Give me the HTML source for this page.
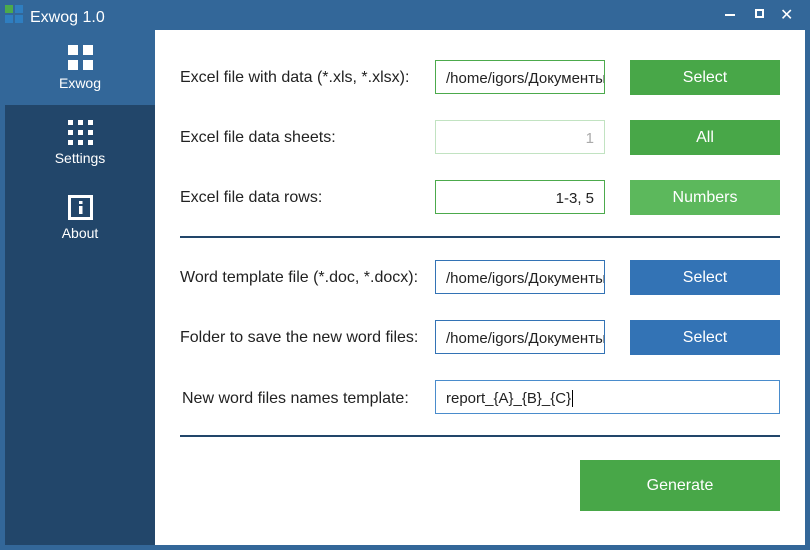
<!DOCTYPE html>
<html><head><style>
*{margin:0;padding:0;box-sizing:border-box}
body{width:810px;height:550px;background:#336799;font-family:"Liberation Sans",sans-serif;position:relative;overflow:hidden}
.a{position:absolute}
.side{left:5px;top:105px;width:150px;height:440px;background:#22466a}
.main{left:155px;top:30px;width:650px;height:515px;background:#fff}
.nav{color:#fff;font-size:14px;width:150px;text-align:center;left:5px}
.lbl{font-size:16px;color:#222;left:180px}
.inp{left:435px;width:170px;height:34px;border:1px solid #4caa4c;font-size:15px;color:#222;padding:1px 10px 0;line-height:33px;white-space:nowrap;overflow:hidden;background:#fff}
.btn{left:630px;width:150px;height:35px;background:#48a748;color:#fff;font-size:16px;text-align:center;line-height:36px}
.blue{background:#3373b5}
.hr{left:180px;width:600px;height:2px;background:#22466a}
.sq{background:#fff}
</style></head><body>
<div class="a" style="left:5px;top:5px;width:8px;height:8px;background:#4caa4c"></div>
<div class="a" style="left:15px;top:5px;width:8px;height:8px;background:#2f7ec0"></div>
<div class="a" style="left:5px;top:15px;width:8px;height:8px;background:#2f7ec0"></div>
<div class="a" style="left:15px;top:15px;width:8px;height:8px;background:#2f7ec0"></div>
<div class="a" style="left:30px;top:9px;color:#fff;font-size:16px">Exwog 1.0</div>
<div class="a" style="left:725px;top:14px;width:10px;height:2px;background:#fff"></div>
<div class="a" style="left:755px;top:9px;width:9px;height:9px;border:2px solid #fff"></div>
<div class="a" style="left:780px;top:5px;color:#fff;font-size:16px">✕</div>
<div class="a side"></div>
<div class="a main"></div>
<div class="a sq" style="left:68px;top:45px;width:10px;height:10px"></div>
<div class="a sq" style="left:83px;top:45px;width:10px;height:10px"></div>
<div class="a sq" style="left:68px;top:60px;width:10px;height:10px"></div>
<div class="a sq" style="left:83px;top:60px;width:10px;height:10px"></div>
<div class="a nav" style="top:75px">Exwog</div>
<svg class="a" style="left:68px;top:120px" width="26" height="26"><g fill="#fff"><rect x="0" y="0" width="5" height="5"/><rect x="10" y="0" width="5" height="5"/><rect x="20" y="0" width="5" height="5"/><rect x="0" y="10" width="5" height="5"/><rect x="10" y="10" width="5" height="5"/><rect x="20" y="10" width="5" height="5"/><rect x="0" y="20" width="5" height="5"/><rect x="10" y="20" width="5" height="5"/><rect x="20" y="20" width="5" height="5"/></g></svg>
<div class="a nav" style="top:150px">Settings</div>
<svg class="a" style="left:68px;top:195px" width="26" height="26"><rect x="1.5" y="1.5" width="22" height="22" fill="none" stroke="#fff" stroke-width="3"/><rect x="11" y="6" width="3.5" height="3" fill="#fff"/><rect x="11" y="11" width="3.5" height="8" fill="#fff"/></svg>
<div class="a nav" style="top:225px">About</div>

<div class="a lbl" style="top:69px">Excel file with data (*.xls, *.xlsx):</div>
<div class="a inp" style="top:60px">/home/igors/Документы</div>
<div class="a btn" style="top:60px">Select</div>
<div class="a lbl" style="top:129px">Excel file data sheets:</div>
<div class="a inp" style="top:120px;border-color:#c2e3c2;color:#aaa;text-align:right">1</div>
<div class="a btn" style="top:120px">All</div>
<div class="a lbl" style="top:189px">Excel file data rows:</div>
<div class="a inp" style="top:180px;text-align:right">1-3, 5</div>
<div class="a btn" style="top:180px;background:#5cb85c">Numbers</div>
<div class="a hr" style="top:236px"></div>
<div class="a lbl" style="top:269px">Word template file (*.doc, *.docx):</div>
<div class="a inp" style="top:260px;border-color:#3373b5">/home/igors/Документы</div>
<div class="a btn blue" style="top:260px">Select</div>
<div class="a lbl" style="top:329px">Folder to save the new word files:</div>
<div class="a inp" style="top:320px;border-color:#3373b5">/home/igors/Документы</div>
<div class="a btn blue" style="top:320px">Select</div>
<div class="a lbl" style="top:390px;left:182px">New word files names template:</div>
<div class="a inp" style="top:380px;width:345px;border-color:#4a8ccc">report_{A}_{B}_{C}<span style="border-left:1px solid #000;margin-left:1px"></span></div>
<div class="a hr" style="top:435px"></div>
<div class="a btn" style="left:580px;top:460px;width:200px;height:51px;line-height:52px">Generate</div>
</body></html>
